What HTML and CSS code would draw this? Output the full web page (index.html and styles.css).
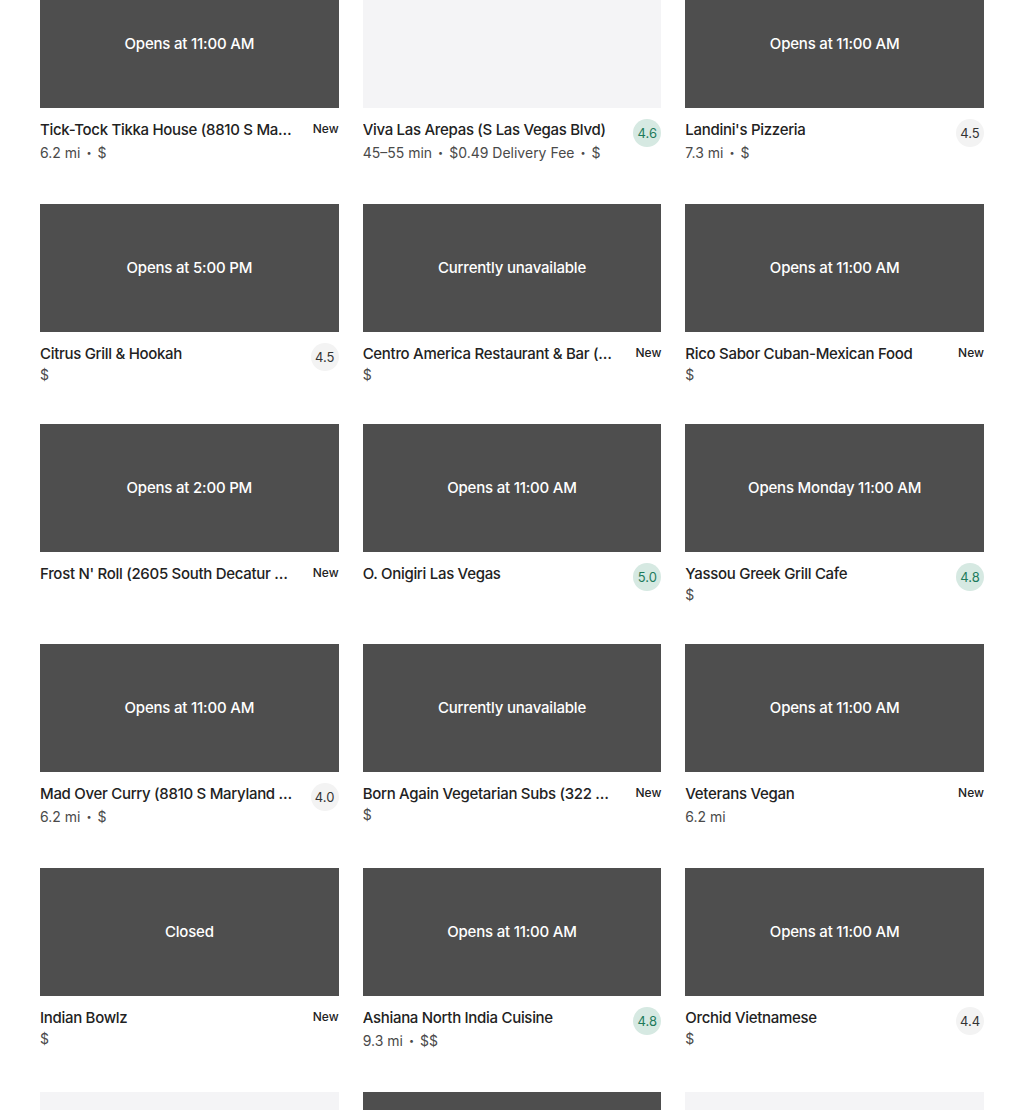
FILE: index.html
```html
<!DOCTYPE html>
<html>
<head>
    <title>Stores near you</title>
    <link rel="stylesheet" href="styles.css">
</head>
<body>
    <div class="grid">
        <!-- row 1 -->
        <div class="card">
            <div class="thumb">Opens at 11:00 AM</div>
            <div class="info">
                <div class="name">Tick-Tock Tikka House (8810 S Maryland Pkwy)</div>
                <div class="tag">New</div>
                <div class="meta dist">6.2 mi<span class="dot">•</span>$</div>
            </div>
        </div>
        <div class="card">
            <div class="thumb empty"></div>
            <div class="info">
                <div class="name">Viva Las Arepas (S Las Vegas Blvd)</div>
                <div class="rating good">4.6</div>
                <div class="meta dist">45–55 min<span class="dot">•</span>$0.49 Delivery Fee<span class="dot">•</span>$</div>
            </div>
        </div>
        <div class="card">
            <div class="thumb">Opens at 11:00 AM</div>
            <div class="info">
                <div class="name">Landini's Pizzeria</div>
                <div class="rating">4.5</div>
                <div class="meta dist">7.3 mi<span class="dot">•</span>$</div>
            </div>
        </div>

        <!-- row 2 -->
        <div class="card">
            <div class="thumb">Opens at 5:00 PM</div>
            <div class="info">
                <div class="name">Citrus Grill &amp; Hookah</div>
                <div class="rating">4.5</div>
                <div class="meta">$</div>
            </div>
        </div>
        <div class="card">
            <div class="thumb">Currently unavailable</div>
            <div class="info">
                <div class="name">Centro America Restaurant &amp; Bar (Las Vegas)</div>
                <div class="tag">New</div>
                <div class="meta">$</div>
            </div>
        </div>
        <div class="card">
            <div class="thumb">Opens at 11:00 AM</div>
            <div class="info">
                <div class="name">Rico Sabor Cuban-Mexican Food</div>
                <div class="tag">New</div>
                <div class="meta">$</div>
            </div>
        </div>

        <!-- row 3 -->
        <div class="card">
            <div class="thumb">Opens at 2:00 PM</div>
            <div class="info">
                <div class="name">Frost N' Roll (2605 South Decatur Blvd)</div>
                <div class="tag">New</div>
            </div>
        </div>
        <div class="card">
            <div class="thumb">Opens at 11:00 AM</div>
            <div class="info">
                <div class="name">O. Onigiri Las Vegas</div>
                <div class="rating good">5.0</div>
            </div>
        </div>
        <div class="card">
            <div class="thumb">Opens Monday 11:00 AM</div>
            <div class="info">
                <div class="name">Yassou Greek Grill Cafe</div>
                <div class="rating good">4.8</div>
                <div class="meta">$</div>
            </div>
        </div>

        <!-- row 4 -->
        <div class="card">
            <div class="thumb">Opens at 11:00 AM</div>
            <div class="info">
                <div class="name">Mad Over Curry (8810 S Maryland Pkwy)</div>
                <div class="rating">4.0</div>
                <div class="meta dist">6.2 mi<span class="dot">•</span>$</div>
            </div>
        </div>
        <div class="card">
            <div class="thumb">Currently unavailable</div>
            <div class="info">
                <div class="name">Born Again Vegetarian Subs (322 W Sahara Ave)</div>
                <div class="tag">New</div>
                <div class="meta">$</div>
            </div>
        </div>
        <div class="card">
            <div class="thumb">Opens at 11:00 AM</div>
            <div class="info">
                <div class="name">Veterans Vegan</div>
                <div class="tag">New</div>
                <div class="meta dist">6.2 mi</div>
            </div>
        </div>

        <!-- row 5 -->
        <div class="card">
            <div class="thumb">Closed</div>
            <div class="info">
                <div class="name">Indian Bowlz</div>
                <div class="tag">New</div>
                <div class="meta">$</div>
            </div>
        </div>
        <div class="card">
            <div class="thumb">Opens at 11:00 AM</div>
            <div class="info">
                <div class="name">Ashiana North India Cuisine</div>
                <div class="rating good">4.8</div>
                <div class="meta dist">9.3 mi<span class="dot">•</span>$$</div>
            </div>
        </div>
        <div class="card">
            <div class="thumb">Opens at 11:00 AM</div>
            <div class="info">
                <div class="name">Orchid Vietnamese</div>
                <div class="rating">4.4</div>
                <div class="meta">$</div>
            </div>
        </div>

        <!-- row 6 -->
        <div class="card"><div class="thumb empty"></div></div>
        <div class="card"><div class="thumb"></div></div>
        <div class="card"><div class="thumb empty"></div></div>
    </div>
</body>
</html>
```

FILE: styles.css
```css
body { margin: 0; background: #fff; font-family: Inter, "Noto Sans", sans-serif; color: #191919; }
.grid { display: grid; grid-template-columns: repeat(3, 1fr); column-gap: 24px; row-gap: 40px; padding: 0 40px; margin-top: -20px; }
.card { min-width: 0; }
.thumb { height: 128px; box-sizing: border-box; padding-bottom: 2px; background: #4e4e4e; color: #fff; display: flex; align-items: center; justify-content: center; font-size: 15px; font-weight: 500; letter-spacing: -0.2px; }
.thumb.empty { background: #f4f4f6; }
.info { display: grid; grid-template-columns: 1fr auto; column-gap: 18px; margin-top: 12px; }
.name { font-size: 15px; font-weight: 500; line-height: 20px; letter-spacing: -0.3px; color: #222; white-space: nowrap; overflow: hidden; text-overflow: ellipsis; }
.tag { font-size: 12px; font-weight: 500; line-height: 18px; text-align: right; color: #222; }
.rating { width: 28px; height: 28px; margin-top: -1px; grid-row: span 2; align-self: start; border-radius: 50%; background: #f3f3f3; color: #333; font-size: 13px; display: flex; align-items: center; justify-content: center; }
.rating.good { background: #d6e9e2; color: #1e7b5c; }
.meta { grid-column: 1; font-size: 14px; line-height: 18px; height: 20px; padding-top: 2px; box-sizing: border-box; color: #4a4a4a; }
.meta.dist { display: flex; align-items: center; height: 24px; }
.dot { font-size: 9px; margin: 0 6px; }
```
